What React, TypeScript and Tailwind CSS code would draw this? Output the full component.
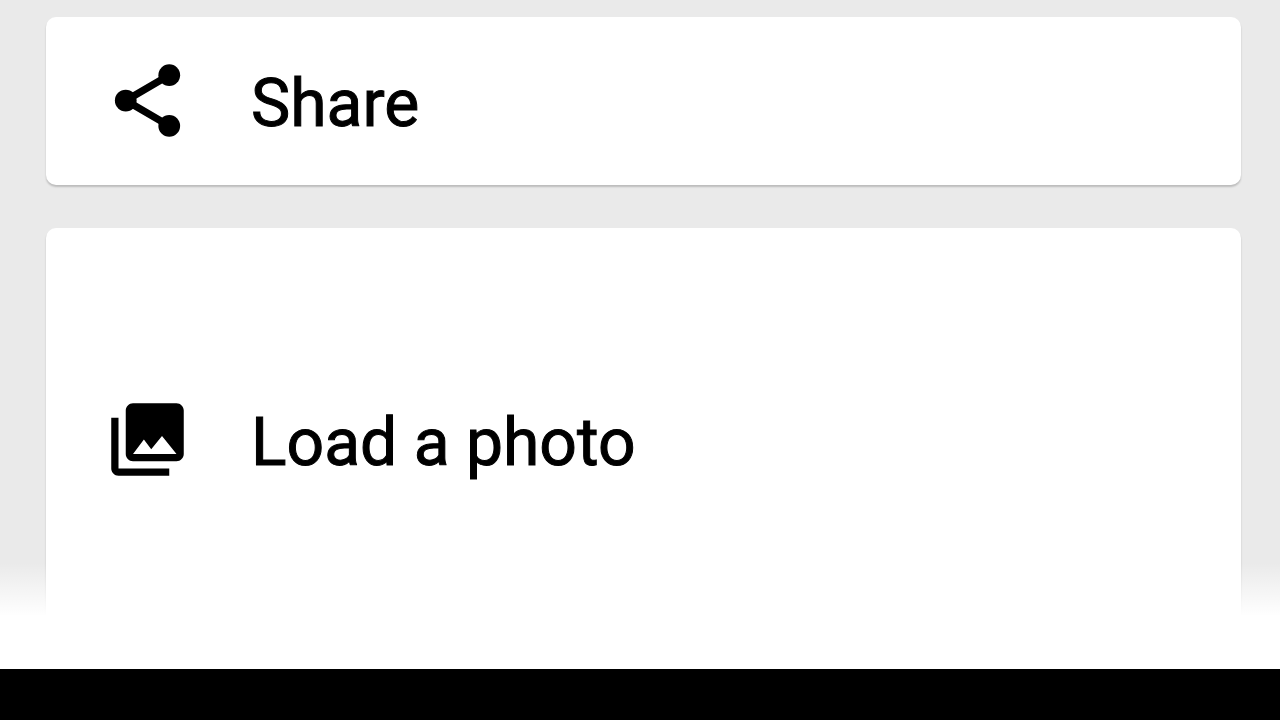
import type { ReactNode } from 'react';
import { MdPhotoLibrary } from 'react-icons/md';

interface ActionCardProps {
  icon: ReactNode;
  label: string;
  className: string;
}

function ShareIcon() {
  return (
    <svg viewBox="0 0 24 24" className="size-[87px] shrink-0" aria-hidden="true">
      <path d="M18 5 6 12l12 7" fill="none" stroke="currentColor" strokeWidth="2" />
      <circle cx="18" cy="5" r="3" fill="currentColor" />
      <circle cx="6" cy="12" r="3" fill="currentColor" />
      <circle cx="18" cy="19" r="3" fill="currentColor" />
    </svg>
  );
}

function ActionCard({ icon, label, className }: ActionCardProps) {
  return (
    <button
      type="button"
      className={`flex w-full items-center gap-15 rounded-[10px] bg-white px-[58px] text-left shadow-[0_2px_2px_rgba(0,0,0,0.2)] ${className}`}
    >
      {icon}
      <span className="pt-[7px] text-[66px] leading-[80px] [-webkit-text-stroke:1px_black]">{label}</span>
    </button>
  );
}

export default function App() {
  return (
    <div className="flex min-h-screen flex-col bg-[#eaeaea] font-[Roboto,sans-serif] text-black">
      <main className="relative flex flex-1 flex-col gap-[43px] pt-[17px] pr-[39px] pb-4 pl-[46px]">
        <ActionCard icon={<ShareIcon />} label="Share" className="pt-10 pb-[41px]" />
        <ActionCard
          icon={<MdPhotoLibrary className="size-[87px] shrink-0" aria-hidden="true" />}
          label="Load a photo"
          className="py-[168px]"
        />

        {/* Fade the list out above the navigation bar */}
        <div className="pointer-events-none absolute inset-x-0 bottom-0 h-[106px] bg-linear-to-b from-transparent to-white to-50%" />
      </main>
      <footer className="h-[51px] bg-black" />
    </div>
  );
}
